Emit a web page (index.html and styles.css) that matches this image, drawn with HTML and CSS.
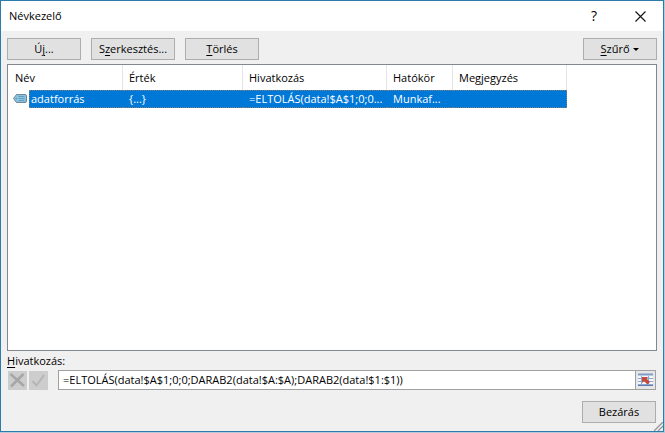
FILE: index.html
```html
<!DOCTYPE html>
<html lang="hu">
<head>
  <meta charset="UTF-8">
  <meta name="viewport" content="width=device-width, initial-scale=1.0">
  <title>Névkezelő</title>
  <link rel="stylesheet" href="styles.css">
</head>
<body>
<div class="dialog">
  <div class="titlebar">
    <h1>Névkezelő</h1>
    <button type="button" class="title-button help" aria-label="Súgó">?</button>
    <button type="button" class="title-button" aria-label="Ablak bezárása">
      <svg width="11" height="11" viewBox="0 0 11 11"><path d="M0.5 0.5L10.500 10.500M10.500 0.5L0.5 10.500" stroke="#111" stroke-width="1.1"/></svg>
    </button>
  </div>

  <div class="toolbar">
    <button type="button" class="btn">Ú<u>j</u>...</button>
    <button type="button" class="btn wide">S<u>z</u>erkesztés...</button>
    <button type="button" class="btn"><u>T</u>örlés</button>
    <button type="button" class="btn filter"><u>S</u>zűrő <span class="arrow"></span></button>
  </div>

  <div class="list">
    <table>
      <colgroup>
        <col class="col-icon">
        <col class="col-name">
        <col class="col-value">
        <col class="col-ref">
        <col class="col-scope">
        <col class="col-comment">
      </colgroup>
      <thead>
        <tr>
          <th colspan="2">Név</th>
          <th>Érték</th>
          <th>Hivatkozás</th>
          <th>Hatókör</th>
          <th>Megjegyzés</th>
        </tr>
      </thead>
      <tbody>
        <tr class="selected">
          <td class="icon-cell">
            <svg width="14" height="10" viewBox="0 0 14 10">
              <path d="M0.5 4.500L3.500 0.5H12Q13.500 0.5 13.500 2V7Q13.500 8.500 12 8.500H3.500Z" fill="#8cc3df" stroke="#6d8795"/>
              <path d="M5.500 2.500H11.500M5.500 4.500H11.500M5.500 6.500H11.500" stroke="#5795b8" stroke-width="0.8"/>
              <circle cx="3.2" cy="4.5" r="0.8" fill="#5f8ba3"/>
            </svg>
          </td>
          <td class="name-cell">adatforrás</td>
          <td>{...}</td>
          <td>=ELTOLÁS(data!$A$1;0;0...</td>
          <td>Munkaf...</td>
          <td></td>
        </tr>
      </tbody>
    </table>
  </div>

  <label class="ref-label" for="reference"><u>H</u>ivatkozás:</label>
  <div class="ref-row">
    <button type="button" class="edit-button" aria-label="Mégse" disabled>
      <svg width="19" height="19" viewBox="0 0 19 19"><path d="M2.500 3L16 15M15.500 3L3 15.500" stroke="#a6a6a6" stroke-width="2.500"/></svg>
    </button>
    <button type="button" class="edit-button" aria-label="Elfogadás" disabled>
      <svg width="19" height="19" viewBox="0 0 19 19"><path d="M3.500 10L7.500 14.500L15 4" fill="none" stroke="#b5b5b5" stroke-width="2"/></svg>
    </button>
    <div class="ref-box">
      <input type="text" id="reference" value="=ELTOLÁS(data!$A$1;0;0;DARAB2(data!$A:$A);DARAB2(data!$1:$1))">
      <button type="button" class="pick-button" aria-label="Tartomány kijelölése">
        <svg width="17" height="14" viewBox="0 0 17 14">
          <path d="M1 1H16V13H1Z" fill="#f4f7fc"/>
          <path d="M1 1.500H16" stroke="#7d9ac6" stroke-width="2"/>
          <path d="M1 5.500H16M1 8.500H16M1 11.500H16M4.500 3V13M11.500 3V13" stroke="#8ba8d4"/>
          <path d="M1 12.500H16" stroke="#5d7eaf"/>
          <path d="M5 4H11L9.500 5.500L13 9L10.500 11.500L7 8L5 10Z" fill="#c64a3c"/>
        </svg>
      </button>
    </div>
  </div>

  <div class="footer">
    <button type="button" class="btn">Bezárás</button>
  </div>

  <svg class="grip" width="9" height="9" viewBox="0 0 9 9"><path d="M0 9L9 0M4 9L9 4" stroke="#969696" stroke-width="1.300"/></svg>
</div>
</body>
</html>
```
FILE: styles.css
```css
* {
  box-sizing: border-box;
}

body {
  margin: 0;
  padding: 0 1px 1px 0;
  min-height: 100vh;
  display: flex;
  background-color: #b8c9d9;
  font-family: "Open Sans", "Segoe UI", sans-serif;
  font-size: 11px;
  line-height: 16px;
  color: #000;
}

button,
input {
  font: inherit;
  color: inherit;
}

u {
  text-underline-offset: 2px;
}

.dialog {
  position: relative;
  flex: 1;
  display: flex;
  flex-direction: column;
  min-width: 0;
  padding-bottom: 8px;
  background-color: #f0f0f0;
  border: 1px solid #2b7bab;
}

/* title bar */
.titlebar {
  display: flex;
  align-items: center;
  height: 30px;
  padding-left: 8px;
  background-color: #fff;
}

.titlebar h1 {
  flex: 1;
  margin: 0;
  font-size: 11px;
  font-weight: normal;
}

.title-button {
  display: flex;
  align-items: center;
  justify-content: center;
  width: 46px;
  height: 28px;
  padding: 0;
  border: none;
  background: none;
}

.help {
  font-size: 14px;
}

/* buttons */
.toolbar {
  display: flex;
  align-items: flex-end;
  gap: 10px;
  margin: 7px 6px 4px;
}

.btn {
  width: 74px;
  height: 22px;
  padding: 0;
  border: 1px solid #adadad;
  background-color: #e1e1e1;
  line-height: 20px;
  white-space: nowrap;
}

.wide {
  width: 84px;
}

.filter {
  margin-left: auto;
}

.arrow {
  display: inline-block;
  margin: 0 0 2px 1px;
  vertical-align: middle;
  border: 3px solid transparent;
  border-top-color: #000;
  border-bottom: none;
}

/* list of names */
.list {
  flex: 1;
  margin: 0 6px;
  border: 1px solid #828790;
  background-color: #fff;
}

table {
  table-layout: fixed;
  width: 559px;
  border-collapse: separate;
  border-spacing: 0;
}

.col-icon { width: 21px; }
.col-name { width: 94px; }
.col-value { width: 120px; }
.col-ref { width: 144px; }
.col-scope { width: 66px; }
.col-comment { width: 114px; }

th,
td {
  padding: 0 0 0 6px;
  text-align: left;
  font-weight: normal;
  white-space: nowrap;
  overflow: hidden;
}

th {
  height: 25px;
  border-right: 1px solid #e5e5e5;
}

th:first-child {
  padding-left: 7px;
}

td {
  height: 17px;
}

.selected td {
  color: #fff;
  background-color: #0078d7;
  border-top: 1px dotted #7c7f80;
  border-bottom: 1px dotted #7c7f80;
}

.selected .name-cell {
  padding-left: 1px;
  border-left: 1px dotted #7c7f80;
}

.selected td:last-child {
  border-right: 1px dotted #7c7f80;
}

.selected .icon-cell {
  padding-left: 5px;
  background: none;
  border: none;
}

.icon-cell svg {
  display: block;
}

/* reference editor */
.ref-label {
  align-self: flex-start;
  margin: 2px 6px 0;
}

.ref-row {
  display: flex;
  align-items: center;
  gap: 2px;
  margin: 1px 7px 0;
}

.edit-button {
  width: 19px;
  height: 19px;
  padding: 0;
  border: none;
  background-color: #cdcdcd;
}

.edit-button svg {
  display: block;
}

.ref-box {
  flex: 1;
  display: flex;
  height: 20px;
  margin-left: 8px;
  border: 1px solid #a0a0a0;
  background-color: #fff;
}

.ref-box input {
  flex: 1;
  min-width: 0;
  padding: 0 4px;
  border: none;
  outline: none;
  background: none;
}

.pick-button {
  display: flex;
  align-items: center;
  justify-content: center;
  width: 20px;
  padding: 0;
  border: none;
  border-left: 1px solid #a0a0a0;
  background-color: #e6e6e6;
}

.footer {
  display: flex;
  justify-content: flex-end;
  margin: 11px 7px 0;
}

.grip {
  position: absolute;
  right: 0;
  bottom: 0;
}
```
